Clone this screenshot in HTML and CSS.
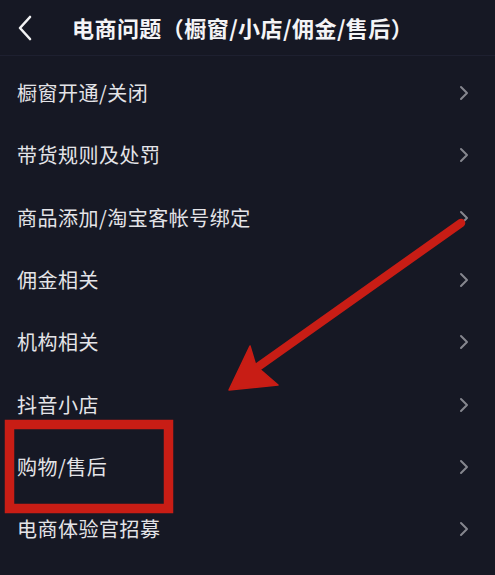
FILE: index.html
```html
<!DOCTYPE html>
<html lang="zh-CN">
<head>
<meta charset="utf-8">
<title>电商问题</title>
<link rel="stylesheet" href="styles.css">
</head>
<body>
<div class="page">
  <header class="header">
    <svg class="back" width="18" height="26" viewBox="0 0 18 26"><path d="M14 2 L4 13 L14 24" fill="none" stroke="#f2f2f4" stroke-width="2.6" stroke-linecap="round" stroke-linejoin="round"/></svg>
    <h1 class="title">电商问题（橱窗/小店/佣金/售后）</h1>
  </header>
  <ul class="list">
    <li class="row"><span class="label">橱窗开通/关闭</span><svg class="chev" width="10" height="16" viewBox="0 0 10 16"><path d="M2 2 L8 8 L2 14" fill="none" stroke="#85868e" stroke-width="2" stroke-linecap="round" stroke-linejoin="round"/></svg></li>
    <li class="row"><span class="label">带货规则及处罚</span><svg class="chev" width="10" height="16" viewBox="0 0 10 16"><path d="M2 2 L8 8 L2 14" fill="none" stroke="#85868e" stroke-width="2" stroke-linecap="round" stroke-linejoin="round"/></svg></li>
    <li class="row"><span class="label">商品添加/淘宝客帐号绑定</span><svg class="chev" width="10" height="16" viewBox="0 0 10 16"><path d="M2 2 L8 8 L2 14" fill="none" stroke="#85868e" stroke-width="2" stroke-linecap="round" stroke-linejoin="round"/></svg></li>
    <li class="row"><span class="label">佣金相关</span><svg class="chev" width="10" height="16" viewBox="0 0 10 16"><path d="M2 2 L8 8 L2 14" fill="none" stroke="#85868e" stroke-width="2" stroke-linecap="round" stroke-linejoin="round"/></svg></li>
    <li class="row"><span class="label">机构相关</span><svg class="chev" width="10" height="16" viewBox="0 0 10 16"><path d="M2 2 L8 8 L2 14" fill="none" stroke="#85868e" stroke-width="2" stroke-linecap="round" stroke-linejoin="round"/></svg></li>
    <li class="row"><span class="label">抖音小店</span><svg class="chev" width="10" height="16" viewBox="0 0 10 16"><path d="M2 2 L8 8 L2 14" fill="none" stroke="#85868e" stroke-width="2" stroke-linecap="round" stroke-linejoin="round"/></svg></li>
    <li class="row"><span class="label">购物/售后</span><svg class="chev" width="10" height="16" viewBox="0 0 10 16"><path d="M2 2 L8 8 L2 14" fill="none" stroke="#85868e" stroke-width="2" stroke-linecap="round" stroke-linejoin="round"/></svg></li>
    <li class="row"><span class="label">电商体验官招募</span><svg class="chev" width="10" height="16" viewBox="0 0 10 16"><path d="M2 2 L8 8 L2 14" fill="none" stroke="#85868e" stroke-width="2" stroke-linecap="round" stroke-linejoin="round"/></svg></li>
  </ul>
  <svg class="annot" width="495" height="575" viewBox="0 0 495 575">
    <rect x="9.5" y="424.5" width="159" height="84" fill="none" stroke="#c81d15" stroke-width="9.5"/>
    <line x1="461" y1="223" x2="252" y2="371" stroke="#c81d15" stroke-width="8.5" stroke-linecap="round"/>
    <polygon points="229,390 250,346 256,366 278,385" fill="#c81d15" stroke="#c81d15" stroke-width="1.5" stroke-linejoin="round"/>
  </svg>
</div>
</body>
</html>
```

FILE: styles.css
```css
html, body {
  margin: 0;
  padding: 0;
  background: #161824;
}
.page {
  position: relative;
  width: 495px;
  height: 575px;
  overflow: hidden;
  background: #161824;
  font-family: "Noto Sans CJK SC", "Noto Sans", sans-serif;
}
.header {
  display: flex;
  align-items: center;
  height: 56px;
  padding-left: 16px;
  box-sizing: border-box;
  border-bottom: 1px solid #1e2030;
}
.back {
  display: block;
  flex: none;
}
.title {
  margin: 0 0 2px 38px;
  font-size: 22px;
  font-weight: 700;
  color: #f4f4f6;
  letter-spacing: 0.45px;
  white-space: nowrap;
}
.list {
  list-style: none;
  margin: 0;
  padding: 6px 0 0 0;
}
.row {
  display: flex;
  align-items: center;
  justify-content: space-between;
  height: 62.3px;
  padding: 0 26px 0 17px;
}
.label {
  font-size: 20px;
  color: #e4e4e8;
  line-height: 1;
  letter-spacing: 0.5px;
}
.chev {
  display: block;
  flex: none;
}
.annot {
  position: absolute;
  left: 0;
  top: 0;
  pointer-events: none;
}
```
